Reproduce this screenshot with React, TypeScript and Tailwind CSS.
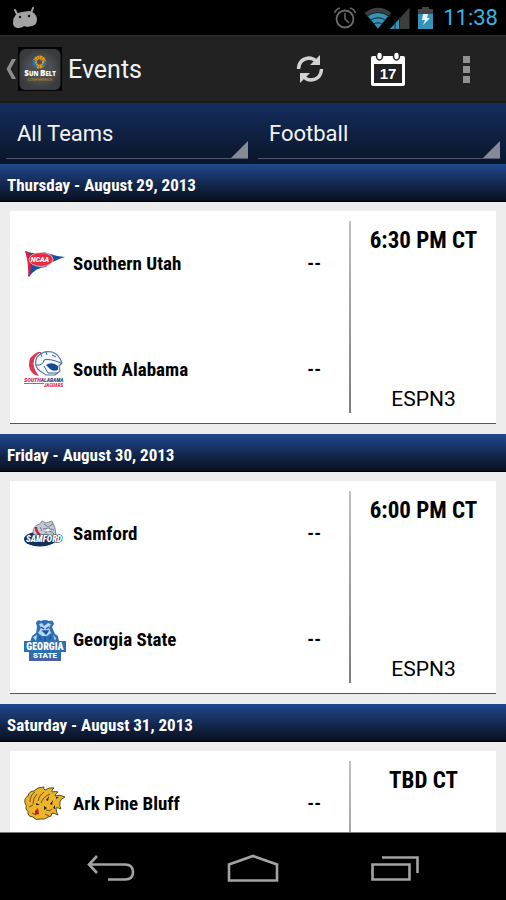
import type { ReactNode } from "react"

const gothic = "font-['Roboto_Condensed','Liberation_Sans_Narrow','Liberation_Sans',sans-serif] font-bold"

function NcaaLogo() {
  return (
    <svg viewBox="0 0 42 42" className="size-[42px]" aria-hidden="true">
      <path d="M1 8 Q12 12 20 9 Q30 13 41 14 Q28 18 22 24 Q12 24 5 34 Q6 20 1 8Z" fill="#1c4f9c" />
      <path d="M1 8 L5 9.500 Q9 20 5 34 L4 33 Q5 20 1 8Z" fill="#e2203a" />
      <ellipse cx="17" cy="16.500" rx="12" ry="7" fill="#ed2c42" stroke="#fff" strokeWidth="0.600" />
      <text x="16" y="19" textAnchor="middle" fontSize="7" fontStyle="italic" fontWeight="900" fill="#fff" fontFamily="Roboto">NCAA</text>
    </svg>
  )
}

function SouthAlabamaLogo() {
  return (
    <svg viewBox="0 0 42 42" className="size-[42px]" aria-hidden="true">
      <path d="M14 3 Q4 7 5 17 Q6 23 11 26 L15 27 Q8 18 10 11 Q12 5 18 3Z" fill="#dd3852" />
      <path d="M13 8 Q19 1 28 3 Q35 5 38 14 L35 17 L36 22 L31 26 L22 26 L16 22 Q9 17 13 8Z" fill="#f5f8fc" stroke="#56789f" strokeWidth="1.200" />
      <path d="M12 16 Q19 17 20 11 Q25 9 37 14 M16 3 L18 8 M22 3 L23 6 M28 6 L32 8 M20 17 L24 24 L34 24" fill="none" stroke="#3c6496" strokeWidth="1" />
      <path d="M22 16 Q28 12 34 17 L34 21 Q29 23 26 20Z" fill="#174b8c" />
      <text x="0" y="33" fontSize="6" fontStyle="italic" fontWeight="900" fontFamily="Roboto Condensed" fill="#d92d49">
        SOUTH<tspan fill="#1d4d88" fontSize="5.500">ALABAMA</tspan>
      </text>
      <path d="M0 34.500 H20" stroke="#5785b5" strokeWidth="1" />
      <text x="20" y="38" fontSize="5" fontStyle="italic" fontWeight="900" fontFamily="Roboto Condensed" fill="#d92d49">JAGUARS</text>
    </svg>
  )
}

function SamfordLogo() {
  return (
    <svg viewBox="0 0 42 42" className="size-[42px]" aria-hidden="true">
      <ellipse cx="16" cy="26" rx="16" ry="7.500" fill="#12305c" />
      <path d="M9 20 Q9 12 16 11 L18 8 L22 10 L28 8 L31 15 L32 23 L12 24Z" fill="#c3c9d1" stroke="#7c899f" strokeWidth="1" />
      <path d="M20 11 L24 14 L29 11 M19 16 Q24 14 30 17 M21 20 Q26 16 30 21 M16 14 L18 18" fill="none" stroke="#6b7890" strokeWidth="1" />
      <path d="M12 14 Q12 19 16 22" fill="none" stroke="#c42848" strokeWidth="2.500" />
      <circle cx="24" cy="17" r="1.500" fill="#fff" />
      <text x="2" y="29" fontSize="9" fontStyle="italic" fontWeight="900" fontFamily="Roboto Condensed" fill="#fff" stroke="#12305c" strokeWidth="1.200" paintOrder="stroke">SAMFORD</text>
    </svg>
  )
}

function GeorgiaStateLogo() {
  return (
    <svg viewBox="0 0 42 42" className="size-[42px]" aria-hidden="true">
      <path d="M12 4 Q13 0 17 2 Q21 0 25 2 Q29 0 30 5 L28 8 L31 15 L34 17 L35 23 H6 L8 17 L12 14 L13 8Z" fill="#2d70b8" />
      <path d="M15 5 L18 4 L20 7 L24 4 L27 5 L25 9 L27 14 L23 17 H18 L14 14 L17 9Z M9 18 L13 16 L12 22Z M29 16 L32 19 L31 22Z" fill="#b9d5ee" />
      <path d="M17 8 L20 10 M25 8 L22 10 M19 12 H24 L22 15Z M15 17 L17 21 M27 17 L25 21 M21 18 V22" stroke="#18559c" strokeWidth="1.400" fill="#18559c" />
      <path d="M0 22 H42 V33 H37 V42 H5 V33 H0Z" fill="#2a6eb5" />
      <text x="21" y="31" textAnchor="middle" fontSize="10" fontWeight="900" fontFamily="Roboto Condensed" fill="#fff">GEORGIA</text>
      <text x="21" y="39" textAnchor="middle" fontSize="8" fontWeight="900" fontFamily="Roboto" fill="#fff">STATE</text>
      <path d="M6 40.500 H36" stroke="#a93d68" strokeWidth="1.500" />
    </svg>
  )
}

function ArkPineBluffLogo() {
  return (
    <svg viewBox="0 0 42 42" className="size-[42px]" aria-hidden="true">
      <path d="M1 20 Q0 15 4 13 Q5 8 10 8 Q13 4 20 4 Q19 6 21 7 Q25 4 30 5 Q27 7 28 9 Q32 8 34 9 Q31 11 31 13 Q36 11 41 14 Q36 16 36 19 Q35 23 37 26 Q33 24 32 25 Q32 29 34 32 Q30 30 28 30 Q28 34 24 34 Q21 37 16 36 Q12 38 9 34 Q5 34 4 31 Q5 28 2 26 Q3 22 1 20Z" fill="#ecb42c" stroke="#5b4a20" strokeWidth="1" strokeLinejoin="round" />
      <path d="M6 19 Q6 12 11 9 M9 21 Q9 15 13 11 M14 18 Q15 12 20 9 M17 20 Q19 14 26 11 M5 24 L9 22 M22 27 Q26 29 28 26 M21 31 L25 33 M8 30 L12 32" fill="none" stroke="#6b5118" strokeWidth="1" />
      <path d="M22 17 L25 13 L24 18Z M26 21 L29 17 L28 22Z M20 23 L23 25 L20 27Z M29 25 L31 22 L31 26Z M12 20 L16 22 L12 22Z M32 14 L35 14 L32 16Z" fill="#241e0e" />
      <path d="M11 28 L14 25 L15 31 L11 32Z" fill="#c31e22" />
    </svg>
  )
}

type Team = { name: string; score: string; logo: ReactNode }

const days: { date: string; time: string; network: string; teams: Team[] }[] = [
  {
    date: "Thursday - August 29, 2013",
    time: "6:30 PM CT",
    network: "ESPN3",
    teams: [
      { name: "Southern Utah", score: "--", logo: <NcaaLogo /> },
      { name: "South Alabama", score: "--", logo: <SouthAlabamaLogo /> },
    ],
  },
  {
    date: "Friday - August 30, 2013",
    time: "6:00 PM CT",
    network: "ESPN3",
    teams: [
      { name: "Samford", score: "--", logo: <SamfordLogo /> },
      { name: "Georgia State", score: "--", logo: <GeorgiaStateLogo /> },
    ],
  },
  {
    date: "Saturday - August 31, 2013",
    time: "TBD CT",
    network: "",
    teams: [{ name: "Ark Pine Bluff", score: "--", logo: <ArkPineBluffLogo /> }],
  },
]

function StatusBar() {
  return (
    <div className="flex h-[35px] shrink-0 items-center bg-black pr-2 pl-3">
      <svg viewBox="0 0 26 22" className="h-[22px] w-[26px]" aria-hidden="true">
        <path d="M1 16 Q1 6 10 5 L17 4 Q24 5 25 12 Q25 18 20 19 L15 20 L12 19 Q10 21 5 21 Q1 20 1 16Z" fill="#a3a3a3" />
        <path d="M5 7 L3 3 M19 6 L21 1" stroke="#a3a3a3" strokeWidth="2" strokeLinecap="round" />
        <circle cx="8" cy="10" r="1.200" fill="#111" />
        <circle cx="17" cy="9" r="1.200" fill="#111" />
      </svg>
      <div className="ml-auto flex items-center">
        <svg viewBox="0 0 22 22" className="mr-2 size-[22px]" fill="none" stroke="#6b6b6b" aria-hidden="true">
          <circle cx="11" cy="12" r="8.500" strokeWidth="1.800" />
          <path d="M11 6 V12 L15 16" strokeWidth="1.500" />
          <path d="M0.500 6 Q2 2 6 1 M21.500 6 Q20 2 16 1" strokeWidth="1.500" />
        </svg>
        <svg viewBox="0 0 46 22" className="mr-2 h-[22px] w-[46px]" aria-hidden="true">
          <path d="M0.500 6 Q14 -4.500 27.500 6 L14 21.500Z" fill="#3d3d3d" />
          <path d="M4 9 Q14 2 24 9 L14 21.500Z" fill="#3593b6" />
          <path d="M2 9.500 Q14 1.500 26 9.500 M6 13.500 Q14 8 22 13.500 M9 17.500 Q14 14 19 17.500" fill="none" stroke="#0c2a36" strokeWidth="1" />
          <path d="M45.500 0.500 V22 H26Z" fill="#3d3d3d" />
          <path d="M36 11 V22 H26Z" fill="#3593b6" />
          <path d="M31 12 V22 M35.500 10 V22" stroke="#0c2a36" strokeWidth="1" />
        </svg>
        <svg viewBox="0 0 15 22" className="mr-[10px] h-[22px] w-[15px]" aria-hidden="true">
          <path d="M4 0 H11 V2 H15 V7 H0 V2 H4Z" fill="#454545" />
          <path d="M0 7 H15 V22 H0Z" fill="#3593b6" />
          <path d="M5 7 H10 L9 11 H12 L5 18 L7 13 H4Z" fill="#e6f2f6" />
        </svg>
        <span className="text-[22px] text-[#33b5e5]">11:38</span>
      </div>
    </div>
  )
}

function AppLogo() {
  return (
    <svg viewBox="0 0 44 44" className="size-11" aria-hidden="true">
      <defs>
        <radialGradient id="tile">
          <stop offset="55%" stopColor="#4d5052" />
          <stop offset="100%" stopColor="#393b3d" />
        </radialGradient>
      </defs>
      <rect width="44" height="44" fill="#050505" />
      <rect x="1.500" y="2" width="41" height="41" rx="6" fill="url(#tile)" />
      <circle cx="21.500" cy="15" r="4.600" fill="none" stroke="#e59a1c" strokeWidth="4" strokeDasharray="2 0.400" />
      <path d="M15.500 13 Q15 18 19 20 M27 14 Q28 17 25 19" fill="none" stroke="#2274b8" strokeWidth="2.500" />
      <text x="22" y="29" textAnchor="middle" fontFamily="Open Sans" fontWeight="800" fontSize="6" fill="#fff">
        <tspan fontSize="8">S</tspan>UN <tspan fontSize="8">B</tspan>ELT
      </text>
      <text x="22" y="34" textAnchor="middle" fontFamily="Roboto" fontSize="4" fill="#bf8a26">CONFERENCE</text>
    </svg>
  )
}

function ActionBar() {
  return (
    <header className="flex h-[68px] shrink-0 items-center border-t border-b-2 border-t-[#2e2e2e] border-b-[#1b1b1b] bg-[#222] pt-px">
      <button aria-label="Navigate up" className="flex items-center gap-[2px] pl-[6px]">
        <svg viewBox="0 0 10 20" className="h-5 w-[10px]" aria-hidden="true">
          <path d="M6 0 H10 L4.500 10 L10 20 H6 L0.500 10Z" fill="#8d8d8d" />
        </svg>
        <AppLogo />
      </button>
      <h1 className="ml-[6px] pt-[2px] text-[25px] text-[#f3f3f3]">Events</h1>
      <div className="ml-auto flex items-center">
        <button aria-label="Refresh" className="flex w-[78px] justify-center">
          <svg viewBox="0 0 28 30" className="h-[30px] w-7" aria-hidden="true">
            <path d="M2.500 15 Q3 5 13 4 Q17 4 20 7" fill="none" stroke="#d2d2d2" strokeWidth="3.400" />
            <path d="M24 1 V11 H14Z" fill="#d2d2d2" />
            <path d="M25.500 15 Q25 25 15 26 Q11 26 8 23" fill="none" stroke="#d2d2d2" strokeWidth="3.400" />
            <path d="M4 29 V19 H14Z" fill="#d2d2d2" />
          </svg>
        </button>
        <button aria-label="Calendar" className="flex w-[78px] justify-center">
          <svg viewBox="0 0 36 36" className="size-9" aria-hidden="true">
            <rect x="1" y="5" width="34" height="30" rx="2" fill="#fff" />
            <rect x="4" y="13" width="28" height="19" fill="#222" />
            <ellipse cx="9.500" cy="5" rx="3" ry="4" fill="#fff" stroke="#222" strokeWidth="1.500" />
            <ellipse cx="26.500" cy="5" rx="3" ry="4" fill="#fff" stroke="#222" strokeWidth="1.500" />
            <text x="18" y="28" textAnchor="middle" fontFamily="Liberation Sans" fontWeight="700" fontSize="15" fill="#fff">17</text>
          </svg>
        </button>
        <button aria-label="More options" className="flex w-[79px] flex-col items-center gap-[3px]">
          <span className="size-[7px] bg-[#919191]" />
          <span className="size-[7px] bg-[#919191]" />
          <span className="size-[7px] bg-[#919191]" />
        </button>
      </div>
    </header>
  )
}

function Spinner({ label, value }: { label: string; value: string }) {
  return (
    <div className="relative flex-1 border-b border-[#4f5a70]">
      <select aria-label={label} className="h-full w-full appearance-none bg-transparent px-[11px] pt-[6px] text-[22px] text-[#f3f3f3]">
        <option>{value}</option>
      </select>
      <svg viewBox="0 0 17 17" className="pointer-events-none absolute right-0 bottom-0 size-[17px]" aria-hidden="true">
        <path d="M17 0 V17 H0Z" fill="#858a96" />
      </svg>
    </div>
  )
}

function EventCard({ time, network, teams }: { time: string; network: string; teams: Team[] }) {
  return (
    <article className="mx-[10px] mt-[9px] mb-[10px] flex min-h-[213px] border-b border-[#555] bg-white">
      <div className="flex-1">
        {teams.map((team) => (
          <div key={team.name} className={`flex h-[106px] items-center pr-7 pl-[14px] text-[19px] ${gothic}`}>
            {team.logo}
            <span className="ml-[7px] flex-1">{team.name}</span>
            <span>{team.score}</span>
          </div>
        ))}
      </div>
      <div className="my-[10px] w-[2px] bg-linear-to-b from-[#c0c0c0] to-[#7c7c7c]" />
      <div className="flex w-[145px] flex-col items-center justify-between py-[10px]">
        <span className={`text-[23px] leading-10 ${gothic}`}>{time}</span>
        <span className="text-[21px] leading-7">{network}</span>
      </div>
    </article>
  )
}

function NavBar() {
  return (
    <nav className="grid h-[68px] shrink-0 grid-cols-3 items-center border-t border-[#777] bg-black px-10 pt-1">
      <button aria-label="Back" className="flex justify-center">
        <svg viewBox="0 0 48 28" className="h-7 w-12" fill="none" stroke="#a3a3a3" strokeWidth="2.600" aria-hidden="true">
          <path d="M2 9.500 H38 Q46 9.500 46 17 Q46 24.500 38 24.500 H21 M10 1 L2 9.500 L10 18" />
        </svg>
      </button>
      <button aria-label="Home" className="flex justify-center">
        <svg viewBox="0 0 52 30" className="h-[30px] w-[52px]" fill="none" stroke="#a3a3a3" strokeWidth="2.600" aria-hidden="true">
          <path d="M2 26.500 V10.500 L26 2 L50 10.500 V26.500Z" />
        </svg>
      </button>
      <button aria-label="Recent apps" className="flex justify-center">
        <svg viewBox="0 0 48 28" className="h-7 w-12" fill="none" stroke="#a3a3a3" strokeWidth="2.600" aria-hidden="true">
          <path d="M1.500 9.500 H38.500 V24.500 H1.500Z M11 2.500 H46.500 V18" />
        </svg>
      </button>
    </nav>
  )
}

export default function App() {
  return (
    <div className="flex h-screen flex-col bg-[#ededed] font-[Roboto,sans-serif] text-black">
      <StatusBar />
      <ActionBar />
      <div className="flex h-[61px] shrink-0 gap-[10px] bg-linear-to-b from-[#152d5d] to-[#09152a] px-[6px] pb-[5px]">
        <Spinner label="Team" value="All Teams" />
        <Spinner label="Sport" value="Football" />
      </div>
      <main className="min-h-0 flex-1 overflow-hidden">
        {days.map((day) => (
          <section key={day.date}>
            <h2 className={`flex h-[38px] items-center border-b border-black bg-linear-to-b from-[#214891] to-[#08101f] px-[7px] pt-[6px] text-[17px] text-white ${gothic}`}>
              {day.date}
            </h2>
            <EventCard time={day.time} network={day.network} teams={day.teams} />
          </section>
        ))}
      </main>
      <NavBar />
    </div>
  )
}
